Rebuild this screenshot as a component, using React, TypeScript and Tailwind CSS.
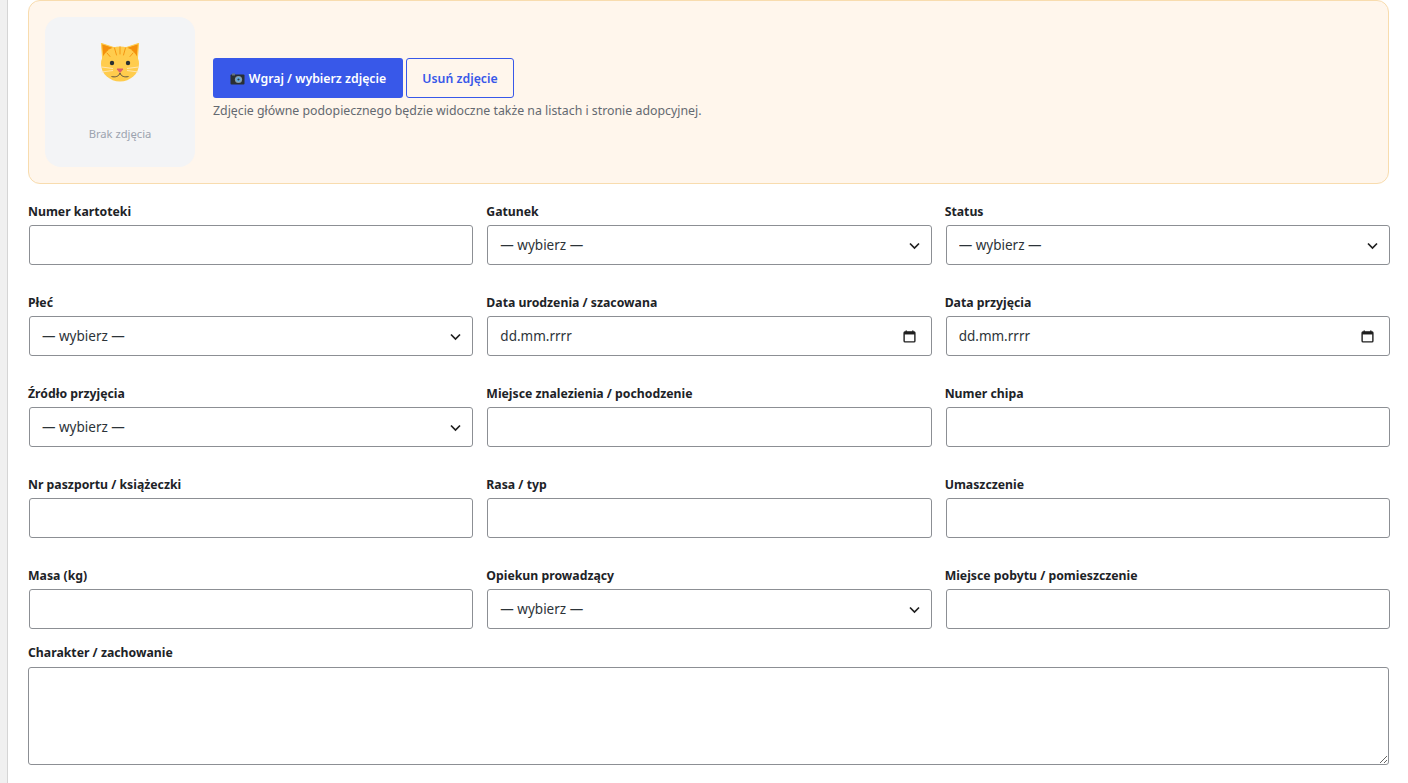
import React from "react";

const CatFace = () => (
  <svg width="42" height="42" viewBox="0 0 42 42" aria-hidden="true">
    <path d="M2.5 2.5 L16 7 L4 21 Z" fill="#f4900c" stroke="#ffcc4d" strokeWidth="1.2" strokeLinejoin="round" />
    <path d="M39.5 2.5 L26 7 L38 21 Z" fill="#f4900c" stroke="#ffcc4d" strokeWidth="1.2" strokeLinejoin="round" />
    <ellipse cx="21" cy="23" rx="19" ry="17.5" fill="#ffcc4d" />
    <path d="M15.5 7 L17.5 14 M21 5.8 V13 M26.5 7 L24.5 14" stroke="#f4900c" strokeWidth="0.9" strokeLinecap="round" />
    <path d="M8 12 L11 15.5 M34 12 L31 15.5" stroke="#f4900c" strokeWidth="0.9" strokeLinecap="round" />
    <circle cx="13" cy="22" r="2.2" fill="#292f33" />
    <circle cx="29" cy="22" r="2.2" fill="#292f33" />
    <path d="M18 28 H24 L21 31.5 Z" fill="#dd5f6a" stroke="#dd5f6a" strokeLinejoin="round" />
    <path d="M12.5 35.5 C16 36.5 20 35.5 21 32 C22 35.5 26 36.5 29.5 35.5" fill="none" stroke="#5c5340" strokeWidth="1" />
    <path d="M2.5 26 L14 27.5 M2.5 31 L14 29.5 M39.5 26 L28 27.5 M39.5 31 L28 29.5" stroke="#ffe8b6" strokeWidth="0.9" />
  </svg>
);

const Camera = () => (
  <svg width="15" height="12" viewBox="0 0 15 12" aria-hidden="true" className="shrink-0">
    <rect x="0.5" y="1.5" width="14" height="10" rx="1" fill="#292f33" />
    <rect x="2" y="0.5" width="3" height="2" fill="#66757f" />
    <circle cx="8.5" cy="6.5" r="3.6" fill="#8899a6" />
    <circle cx="8.5" cy="6.5" r="2.3" fill="#55acee" />
    <circle cx="8.5" cy="6.5" r="1.1" fill="#31373d" />
  </svg>
);

const inputCls =
  "ml-px w-full h-10 rounded-[3px] border border-[#8c8f94] bg-white px-3 text-[13.5px] text-[#2c3338] outline-none";

const labelCls = "block h-[25px] pt-[3px] text-[12.25px] leading-[18px] font-bold text-[#1d2327]";

const Field = ({ label, children }: { label: string; children: React.ReactNode }) => (
  <div className="min-w-0">
    <label className={labelCls}>{label}</label>
    {children}
  </div>
);

const TextField = ({ label }: { label: string }) => (
  <Field label={label}>
    <input type="text" className={inputCls} />
  </Field>
);

const SelectField = ({ label }: { label: string }) => (
  <Field label={label}>
    <div className="relative">
      <select className={inputCls + " appearance-none"} defaultValue="">
        <option value="">— wybierz —</option>
      </select>
      <svg
        className="absolute right-[11px] top-[17px] pointer-events-none"
        width="11"
        height="8"
        viewBox="0 0 11 8"
        aria-hidden="true"
      >
        <path d="M1 1.5 L5.5 6 L10 1.5" fill="none" stroke="#1f1f1f" strokeWidth="1.7" />
      </svg>
    </div>
  </Field>
);

const DateField = ({ label }: { label: string }) => (
  <Field label={label}>
    <div className="relative">
      <input type="text" readOnly value="dd.mm.rrrr" className={inputCls} />
      <svg
        className="absolute right-[15px] top-[14px] pointer-events-none"
        width="13"
        height="13"
        viewBox="0 0 14 14"
        aria-hidden="true"
      >
        <path d="M3.5 0.5 V2 M10.5 0.5 V2" stroke="#1f1f1f" strokeWidth="1.6" />
        <rect x="1.2" y="2" width="11.6" height="10.8" rx="1" fill="none" stroke="#1f1f1f" strokeWidth="1.5" />
        <rect x="1.2" y="2" width="11.6" height="2.8" fill="#1f1f1f" />
      </svg>
    </div>
  </Field>
);

export default function App() {
  return (
    <div className="flex h-[783px] overflow-hidden bg-white font-['Noto_Sans','Open_Sans',sans-serif]">
      {/* wp admin edge */}
      <div className="w-2 shrink-0 border-r border-[#d5d5d5] bg-[#f0f0f0]" />

      <div className="flex-1 min-w-0 pl-5 pr-[19px]">
        <div className="flex h-[184px] items-center gap-[18px] rounded-xl border border-[#f8dcae] bg-[#fff6ec] px-4">
          <div className="flex h-[150px] w-[150px] shrink-0 flex-col items-center rounded-2xl bg-[#f3f4f6] pt-[24px]">
            <CatFace />
            <span className="mt-[42px] text-[11.2px] leading-[18px] text-[#9ca3af]">Brak zdjęcia</span>
          </div>
          <div className="mt-[-6px]">
            <div className="flex gap-[3px]">
              <button className="flex h-10 w-[190px] items-center justify-center gap-1 rounded-[3px] bg-[#3858e9] pt-[2px] text-[12.3px] font-semibold text-white">
                <Camera />
                Wgraj / wybierz zdjęcie
              </button>
              <button className="h-10 w-[108px] rounded-[3px] border border-[#3858e9] bg-transparent pt-[2px] text-[12.3px] font-semibold text-[#3858e9]">
                Usuń zdjęcie
              </button>
            </div>
            <p className="mt-[4px] text-[12.33px] leading-[18px] text-[#646970]">
              Zdjęcie główne podopiecznego będzie widoczne także na listach i stronie adopcyjnej.
            </p>
          </div>
        </div>

        <div className="mt-[16px] grid grid-cols-3 gap-x-[14px] gap-y-[26px]">
          <TextField label="Numer kartoteki" />
          <SelectField label="Gatunek" />
          <SelectField label="Status" />
          <SelectField label="Płeć" />
          <DateField label="Data urodzenia / szacowana" />
          <DateField label="Data przyjęcia" />
          <SelectField label="Źródło przyjęcia" />
          <TextField label="Miejsce znalezienia / pochodzenie" />
          <TextField label="Numer chipa" />
          <TextField label="Nr paszportu / książeczki" />
          <TextField label="Rasa / typ" />
          <TextField label="Umaszczenie" />
          <TextField label="Masa (kg)" />
          <SelectField label="Opiekun prowadzący" />
          <TextField label="Miejsce pobytu / pomieszczenie" />
        </div>

        <div className="mt-[12px]">
          <label className={labelCls + " mb-px"}>Charakter / zachowanie</label>
          <textarea className="block h-[98px] w-full rounded-[3px] border border-[#8c8f94] bg-white outline-none" />
        </div>
      </div>
    </div>
  );
}
